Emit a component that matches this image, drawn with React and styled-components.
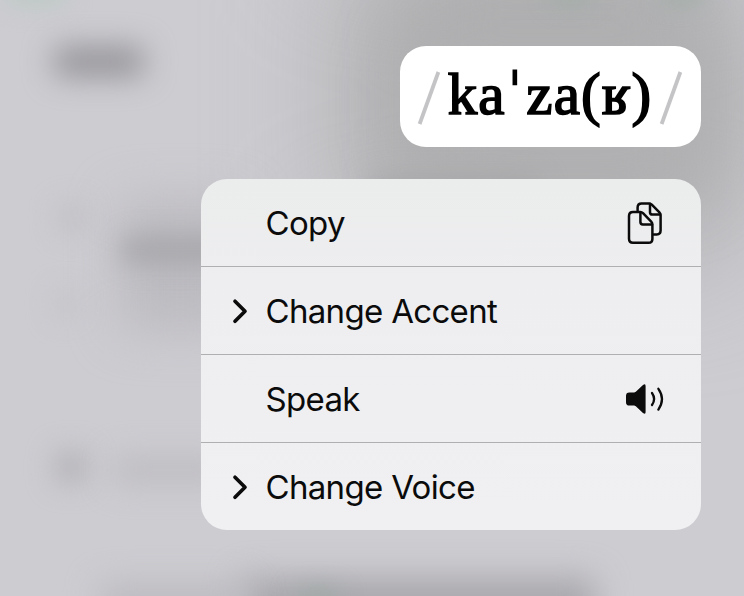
import React from 'react'
import styled, { createGlobalStyle } from "styled-components";

const GlobalStyle = createGlobalStyle`
    * {
        box-sizing: border-box;
    }

    body {
        margin: 0;
        overflow: hidden;
    }
`;

const Screen = styled.div`
    position: relative;
    isolation: isolate;
    overflow: hidden;
    width: 100vw;
    height: 100vh;
    padding: 46px 43px 0 0;
    display: flex;
    flex-direction: column;
    align-items: flex-end;
    gap: 32px;
    font-family: Inter, "Liberation Sans", sans-serif;
    color: #0b0b0c;
    background-color: #cdccd1;
`;

/* dimmed page content behind the menu */
const Smudge = styled.div`
    position: absolute;
    z-index: -1;
    left: ${props => props.$x}px;
    top: ${props => props.$y}px;
    width: ${props => props.$w}px;
    height: ${props => props.$h}px;
    border-radius: ${props => props.$round || 8}px;
    background-color: ${props => props.$color};
    filter: blur(${props => props.$blur}px);
`;

const Preview = styled.div`
    width: 301px;
    height: 101px;
    flex: none;
    display: flex;
    justify-content: space-between;
    align-items: center;
    padding: 0 18px 0 17px;
    border-radius: 26px;
    background-color: #fff;
`;

const Slash = styled.svg`
    width: 24px;
    height: 54px;
    flex: none;
    stroke: #c4c4c6;
    stroke-width: 3.8;
    margin-top: 2px;
`;

const Phonetic = styled.div`
    font-family: "Liberation Serif", serif;
    font-weight: 400;
    font-size: 59px;
    line-height: 100px;
    letter-spacing: 1.1px;
    padding-bottom: 5px;
    color: #000;
    -webkit-text-stroke: 1.7px #000;
    white-space: nowrap;
`;

/* the stress mark is taller and heavier than the font's own */
const Stress = styled.span`
    display: inline-block;
    line-height: 1;
    transform: translate(-1px, 2px) scale(0.95, 1.45);
    transform-origin: 50% 30%;
`;

const Menu = styled.div`
    width: 500px;
    height: 351px;
    flex: none;
    border-radius: 26px;
    overflow: hidden;
    background: linear-gradient(#ebecec, #eeeef0 30%, #f0f0f2);
`;

const Item = styled.div`
    height: 88px;
    display: grid;
    grid-template-columns: 34px 1fr 40px;
    align-items: center;
    padding: 0 36px 0 30px;
    border-bottom: 1px solid #afafb2;

    &:last-child {
        height: 87px;
        border-bottom: none;
    }

    & > .label {
        grid-column: 2;
        font-size: 33px;
        line-height: 40px;
        letter-spacing: -0.68px;
        padding-left: 0.5px;
        white-space: nowrap;
    }
`;

const Icon = styled.svg`
    display: block;
    grid-row: 1;
    grid-column: ${props => props.$col};
    width: ${props => props.$w}px;
    height: ${props => props.$h}px;
    fill: none;
    stroke: #0b0b0c;
    stroke-linecap: round;
    stroke-linejoin: round;
`;

const Chevron = () => (
    <Icon $col={1} $w={18} $h={28} viewBox="0 0 18 28" strokeWidth="3.7">
        <path d="M4 4.2 L14 14.2 L4 24.2" />
    </Icon>
);

const CopyIcon = () => (
    <Icon $col={3} $w={40} $h={44} viewBox="0 0 40 44" strokeWidth="2.5">
        <path d="M12.6 9.6 V6.4 Q12.6 2.4 16.6 2.4 H23.8 Q25.6 2.4 26.8 3.6 L34.4 11.4 Q35.6 12.6 35.6 14.4 V29.6 Q35.6 33.4 31.8 33.4 H28.6" />
        <path d="M25 2.8 V11.2 Q25 13.6 27.4 13.6 H35.2" />
        <path d="M8 11 H15.2 Q16.8 11 18 12.2 L26.2 20.6 Q27.4 21.8 27.4 23.6 V38 Q27.4 41.8 23.6 41.8 H8 Q4 41.8 4 37.8 V15 Q4 11 8 11 Z" />
        <path d="M15.4 11.4 V21 Q15.4 23.4 17.8 23.4 H27" />
    </Icon>
);

const SpeakerIcon = () => (
    <Icon $col={3} $w={40} $h={34} viewBox="0 0 40 34" strokeWidth="2.3">
        <path fill="#0b0b0c" stroke="none" d="M4.4 10.4 H9 Q10 10.4 10.8 9.7 L18 3 Q20.6 1 20.6 4 V30 Q20.6 33 18 31 L10.8 24.3 Q10 23.6 9 23.6 H4.4 Q1 23.6 1 20.2 V13.8 Q1 10.4 4.4 10.4 Z" />
        <path d="M27 11 Q31.2 17 27 23" />
        <path d="M33.4 6.8 Q40.6 17 33.4 27.6" />
    </Icon>
);

const smudges = [
    { x: 350, y: -60, w: 390, h: 310, blur: 64, color: "#aaaaab", round: 40 },
    { x: 410, y: 20, w: 300, h: 170, blur: 34, color: "#b1b1b3", round: 40 },
    { x: 370, y: 178, w: 170, h: 30, blur: 13, color: "#a6a6a8" },
    { x: 54, y: 47, w: 90, h: 29, blur: 15, color: "#929196" },
    { x: 120, y: 200, w: 120, h: 130, blur: 24, color: "#bcbbc0" },
    { x: 122, y: 237, w: 150, h: 26, blur: 13, color: "#a7a6aa" },
    { x: 60, y: 206, w: 24, h: 24, blur: 14, color: "#bcbbc0" },
    { x: 56, y: 292, w: 20, h: 24, blur: 14, color: "#c1c0c5" },
    { x: 56, y: 452, w: 30, h: 30, blur: 14, color: "#b0afb4" },
    { x: 112, y: 456, w: 120, h: 28, blur: 15, color: "#bebdc2" },
    { x: 240, y: 578, w: 355, h: 50, blur: 16, color: "#a8a7ac" },
    { x: 296, y: 590, w: 44, h: 26, blur: 12, color: "#9fa8a5" },
    { x: 100, y: 584, w: 150, h: 36, blur: 16, color: "#bbbabf" },
    { x: 548, y: -18, w: 44, h: 22, blur: 11, color: "#a2aea7" },
    { x: 660, y: -18, w: 44, h: 22, blur: 11, color: "#a2aea7" },
    { x: 6, y: -20, w: 60, h: 24, blur: 12, color: "#bac9c3" },
];

const items = [
    { label: "Copy", icon: <CopyIcon /> },
    { label: "Change Accent", submenu: true },
    { label: "Speak", icon: <SpeakerIcon /> },
    { label: "Change Voice", submenu: true },
];

const SlashMark = () => (
    <Slash viewBox="0 0 24 54">
        <path d="M2.6 53 L21.4 1" />
    </Slash>
);

const App = () => {
    return (
        <>
            <GlobalStyle />

            <Screen>

                {
                    smudges.map((s, index) => (
                        <Smudge key={index} $x={s.x} $y={s.y} $w={s.w} $h={s.h} $blur={s.blur} $color={s.color} $round={s.round} />
                    ))
                }

                <Preview>
                    <SlashMark />
                    <Phonetic>ka<Stress>ˈ</Stress>za(ʁ)</Phonetic>
                    <SlashMark />
                </Preview>

                <Menu>
                    {
                        items.map(item => (
                            <Item key={item.label}>
                                {item.submenu && <Chevron />}

                                <div className="label">{item.label}</div>

                                {item.icon}
                            </Item>
                        ))
                    }
                </Menu>

            </Screen>
        </>
    )
}

export default App;
